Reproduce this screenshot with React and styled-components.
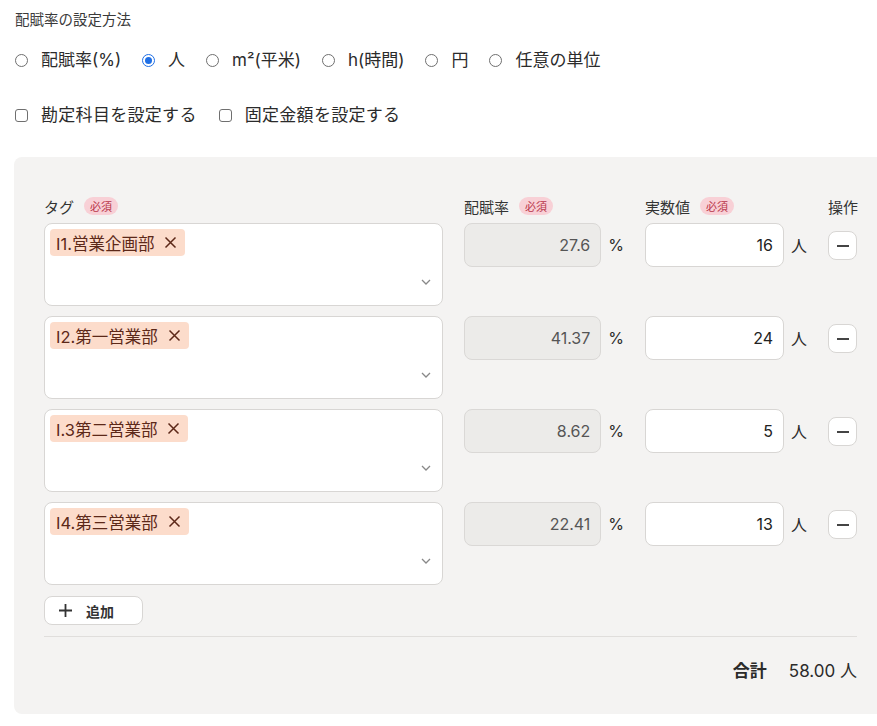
import React from 'react'
import styled, { createGlobalStyle } from 'styled-components'

const GlobalStyle = createGlobalStyle`
  html, body {
    margin: 0;
    padding: 0;
    background: #fff;
    overflow: hidden;
  }
  body {
    font-family: Inter, "Noto Sans CJK JP", sans-serif;
    color: #2b2b2b;
  }
`

const Page = styled.div`
  padding: 11px 0 0 14px;
  width: 873px;
`

const Caption = styled.div`
  font-size: 14.5px;
  color: #3a3a3a;
  line-height: 18px;
  margin-left: 1px;
`

const OptionRow = styled.div`
  display: flex;
  align-items: center;
  gap: ${p => p.$gap}px;
  margin-top: ${p => p.$top}px;
  margin-left: 1px;
`

const Option = styled.label`
  display: flex;
  align-items: center;
  gap: 13px;
  font-size: 17px;
  line-height: 22px;
  color: #2b2b2b;
  letter-spacing: ${p => (p.$wide ? '0.3px' : '0')};
`

const RadioMark = styled.span`
  width: 13px;
  height: 13px;
  box-sizing: border-box;
  border-radius: 50%;
  border: 1px solid ${p => (p.$checked ? '#1f6fe5' : '#6f6f6f')};
  display: flex;
  align-items: center;
  justify-content: center;
  background: #fff;

  &::after {
    content: '';
    width: 7px;
    height: 7px;
    border-radius: 50%;
    background: #1f6fe5;
    display: ${p => (p.$checked ? 'block' : 'none')};
  }
`

const CheckMark = styled.span`
  width: 13px;
  height: 13px;
  box-sizing: border-box;
  border-radius: 3px;
  border: 1px solid #6f6f6f;
  background: #fff;
`

const Panel = styled.div`
  margin-top: 31px;
  background: #f4f3f2;
  border-radius: 8px;
  padding: 40px 30px 0 30px;
  height: 557px;
  box-sizing: border-box;
`

const Grid = styled.div`
  display: grid;
  grid-template-columns: 399px 160px 162px 29px;
  column-gap: 21px;
`

const HeaderCell = styled.div`
  display: flex;
  align-items: center;
  gap: 10px;
  font-size: 15px;
  color: #333;
  height: 18px;
  margin-bottom: 8px;
  white-space: nowrap;
`

const Badge = styled.span`
  display: inline-flex;
  align-items: center;
  justify-content: center;
  height: 18px;
  padding: 0 6px;
  border-radius: 9px;
  background: #f8d0d6;
  color: #b8364a;
  font-size: 11px;
`

const Rows = styled.div`
  display: flex;
  flex-direction: column;
  gap: 10px;
`

const Row = styled(Grid)`
  align-items: start;
`

const TagBox = styled.div`
  position: relative;
  height: 83px;
  box-sizing: border-box;
  background: #fff;
  border: 1px solid #d8d6d4;
  border-radius: 8px;
  padding: 5px;
`

const Chip = styled.span`
  display: inline-flex;
  align-items: center;
  gap: 10px;
  height: 27px;
  padding: 0 8px 0 6px;
  border-radius: 4px;
  background: #fcdccb;
  color: #5c2818;
  font-size: 16.5px;
`

const Chevron = styled.svg`
  position: absolute;
  right: 11px;
  bottom: 20px;
`

const UnitCell = styled.div`
  display: flex;
  align-items: center;
  gap: 7px;
  font-size: 16px;
  color: #2b2b2b;
`

const NumberBox = styled.div`
  width: 139px;
  height: 44px;
  box-sizing: border-box;
  border-radius: 8px;
  border: 1px solid ${p => (p.$readonly ? '#dad8d6' : '#d8d6d4')};
  background: ${p => (p.$readonly ? '#ecebe9' : '#fff')};
  color: ${p => (p.$readonly ? '#555' : '#222')};
  display: flex;
  align-items: center;
  justify-content: flex-end;
  padding-right: 10px;
  font-size: 16px;
`

const IconButton = styled.button`
  width: 29px;
  height: 29px;
  margin-top: 8px;
  border-radius: 8px;
  border: 1px solid #d8d6d4;
  background: #fff;
  display: flex;
  align-items: center;
  justify-content: center;
  padding: 0;
`

const AddButton = styled.button`
  margin-top: 11px;
  width: 99px;
  height: 29px;
  border-radius: 8px;
  border: 1px solid #d8d6d4;
  background: #fff;
  display: flex;
  align-items: center;
  gap: 14px;
  padding: 0 0 0 14px;
  font-family: inherit;
  font-size: 14px;
  font-weight: bold;
  color: #333;
`

const Divider = styled.div`
  margin-top: 11px;
  height: 1px;
  background: #e0dedc;
  width: 813px;
`

const TotalRow = styled.div`
  width: 813px;
  display: flex;
  justify-content: flex-end;
  align-items: center;
  gap: 22px;
  margin-top: 20px;
  font-size: 17px;
  color: #2b2b2b;
`

const TotalLabel = styled.span`
  font-weight: bold;
`

const radios = [
  { label: '配賦率(%)' },
  { label: '人', checked: true },
  { label: 'm²(平米)' },
  { label: 'h(時間)' },
  { label: '円' },
  { label: '任意の単位' }
]

const rows = [
  { tag: 'I1.営業企画部', rate: '27.6', value: '16' },
  { tag: 'I2.第一営業部', rate: '41.37', value: '24' },
  { tag: 'I.3第二営業部', rate: '8.62', value: '5' },
  { tag: 'I4.第三営業部', rate: '22.41', value: '13' }
]

const CloseIcon = () => (
  <svg width="13" height="13" viewBox="0 0 13 13">
    <path d="M1.5 1.5 L11.5 11.5 M11.5 1.5 L1.5 11.5" stroke="#5c2818" strokeWidth="1.5" />
  </svg>
)

const App = () => (
  <>
    <GlobalStyle />
    <Page>
      <Caption>配賦率の設定方法</Caption>
      <OptionRow $top={20} $gap={21}>
        {radios.map(r => (
          <Option key={r.label}>
            <RadioMark $checked={r.checked} />
            {r.label}
          </Option>
        ))}
      </OptionRow>
      <OptionRow $top={33} $gap={22}>
        <Option $wide>
          <CheckMark />
          勘定科目を設定する
        </Option>
        <Option $wide>
          <CheckMark />
          固定金額を設定する
        </Option>
      </OptionRow>

      <Panel>
        <Grid>
          <HeaderCell>タグ<Badge>必須</Badge></HeaderCell>
          <HeaderCell>配賦率<Badge>必須</Badge></HeaderCell>
          <HeaderCell>実数値<Badge>必須</Badge></HeaderCell>
          <HeaderCell>操作</HeaderCell>
        </Grid>
        <Rows>
          {rows.map(row => (
            <Row key={row.tag}>
              <TagBox>
                <Chip>
                  {row.tag}
                  <CloseIcon />
                </Chip>
                <Chevron width="10" height="6" viewBox="0 0 10 6">
                  <path d="M1 1 L5 5 L9 1" fill="none" stroke="#888" strokeWidth="1.3" />
                </Chevron>
              </TagBox>
              <UnitCell>
                <NumberBox $readonly>{row.rate}</NumberBox>%
              </UnitCell>
              <UnitCell>
                <NumberBox>{row.value}</NumberBox>人
              </UnitCell>
              <IconButton aria-label="削除">
                <svg width="12" height="2" viewBox="0 0 12 2">
                  <rect width="12" height="2" fill="#444" />
                </svg>
              </IconButton>
            </Row>
          ))}
        </Rows>
        <AddButton>
          <svg width="13" height="13" viewBox="0 0 13 13">
            <path d="M6.5 0 V13 M0 6.5 H13" stroke="#333" strokeWidth="1.8" />
          </svg>
          追加
        </AddButton>
        <Divider />
        <TotalRow>
          <TotalLabel>合計</TotalLabel>
          <span>58.00 人</span>
        </TotalRow>
      </Panel>
    </Page>
  </>
)

export default App
